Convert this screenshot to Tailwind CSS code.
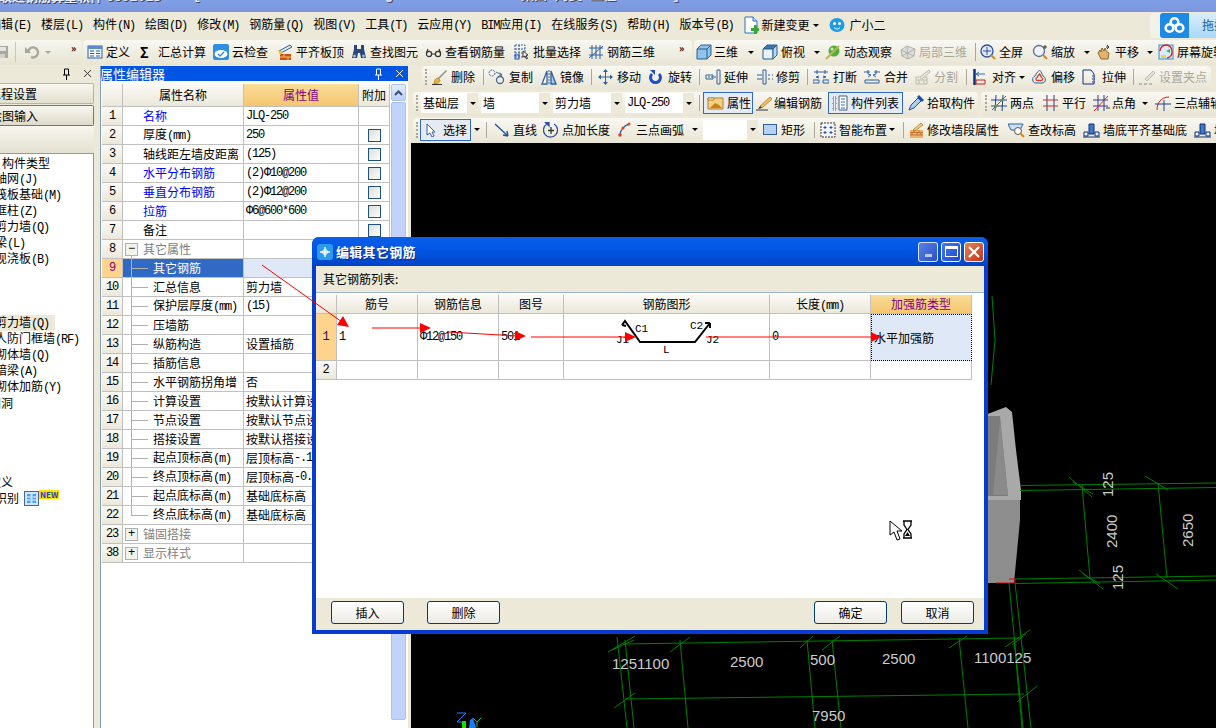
<!DOCTYPE html>
<html lang="zh-CN">
<head>
    <meta charset="UTF-8">
    <title>钢筋算量软件 GGJ2013</title>
    <script src="https://cdn.jsdelivr.net/npm/@tailwindcss/browser@4"></script>
</head>
<body class="relative h-[728px] w-[1216px] overflow-hidden bg-[#ece9d8] font-['Noto_Sans_CJK_SC','Liberation_Sans',sans-serif] text-[12px] leading-[14px] text-black">

    <!-- Title bar, cut off by the top of the window -->
    <div class="h-[12px] overflow-hidden whitespace-nowrap bg-gradient-to-b from-[#7f9fe6] to-[#7c96dc] text-[13px] font-bold text-[#e8ecf8] [text-shadow:1px_1px_0_#445]">
        <div class="-mt-[11px] flex">
            <span class="ml-[-14px] w-[207px] shrink-0">广联达钢筋算量软件 <span class="font-['Liberation_Mono',monospace] text-[13px] tracking-[0.1px]">GGJ2013</span></span>
            <span class="font-['Liberation_Mono',monospace] text-[13px] tracking-[0.2px]">[C:\Documents and Settings\Administrator\桌面\刘斐\工程1.GGJ12]</span>
        </div>
    </div>

    <!-- Menu bar -->
    <div class="flex h-[26px] items-center gap-[10px] whitespace-nowrap pr-0">
        <span class="-ml-[11px]">编辑<span class="font-['Liberation_Mono',monospace] text-[12px] tracking-[-1.2px]">(E)</span></span>
        <span>楼层<span class="font-['Liberation_Mono',monospace] text-[12px] tracking-[-1.2px]">(L)</span></span>
        <span>构件<span class="font-['Liberation_Mono',monospace] text-[12px] tracking-[-1.2px]">(N)</span></span>
        <span>绘图<span class="font-['Liberation_Mono',monospace] text-[12px] tracking-[-1.2px]">(D)</span></span>
        <span>修改<span class="font-['Liberation_Mono',monospace] text-[12px] tracking-[-1.2px]">(M)</span></span>
        <span>钢筋量<span class="font-['Liberation_Mono',monospace] text-[12px] tracking-[-1.2px]">(Q)</span></span>
        <span>视图<span class="font-['Liberation_Mono',monospace] text-[12px] tracking-[-1.2px]">(V)</span></span>
        <span>工具<span class="font-['Liberation_Mono',monospace] text-[12px] tracking-[-1.2px]">(T)</span></span>
        <span>云应用<span class="font-['Liberation_Mono',monospace] text-[12px] tracking-[-1.2px]">(Y)</span></span>
        <span><span class="font-['Liberation_Mono',monospace] text-[12px] tracking-[-1.2px]">BIM</span>应用<span class="font-['Liberation_Mono',monospace] text-[12px] tracking-[-1.2px]">(I)</span></span>
        <span>在线服务<span class="font-['Liberation_Mono',monospace] text-[12px] tracking-[-1.2px]">(S)</span></span>
        <span>帮助<span class="font-['Liberation_Mono',monospace] text-[12px] tracking-[-1.2px]">(H)</span></span>
        <span>版本号<span class="font-['Liberation_Mono',monospace] text-[12px] tracking-[-1.2px]">(B)</span></span>
        <span class="flex items-center gap-[2px]">
            <svg class="h-[18px] w-4 shrink-0" viewBox="0 0 16 18"><path d="M2 1h8l4 4v12H2z" fill="#fff" stroke="#2a6fc0"/><path d="M10 1v4h4" fill="#cfe0f5" stroke="#2a6fc0"/><path d="M11 9v3H8v3h3v3h3v-3h2v-3h-2V9z" fill="#3aa53a"/></svg>
            新建变更
        </span>
        <i class="-ml-[6px] border-x-[3px] border-t-[3px] border-x-transparent border-t-black"></i>
        <span class="flex items-center gap-[4px]">
            <svg class="h-4 w-4 shrink-0" viewBox="0 0 16 16"><ellipse cx="8" cy="8" rx="7.5" ry="7" fill="#1f9be6"/><circle cx="5.5" cy="6.5" r="1.5" fill="#fff"/><circle cx="10.5" cy="6.5" r="1.5" fill="#fff"/><path d="M5 10.5c2 2 4 2 6 0" stroke="#fff" fill="none"/></svg>
            广小二
        </span>
        <div class="ml-auto flex h-[25px] w-[66px] shrink-0 items-center rounded-l-[4px] bg-[#f4f2e8] pl-[10px]">
            <div class="flex h-[25px] w-[29px] shrink-0 items-center justify-center rounded-l-[3px] bg-[#1d8ae6]">
                <svg class="h-[18px] w-[21px]" viewBox="0 0 21 18" fill="none" stroke="#fff" stroke-width="2.6"><circle cx="10.5" cy="6" r="3.8"/><circle cx="5.5" cy="12" r="3.8"/><circle cx="15.5" cy="12" r="3.8"/></svg>
            </div>
            <div class="flex h-[25px] flex-1 items-center overflow-hidden bg-gradient-to-b from-[#d8eefc] to-[#a9d8f6] pl-[13px] text-[#1d5c96]">拖拽</div>
        </div>
    </div>

    <!-- Top toolbars -->
    <div class="flex h-[28px] items-center overflow-hidden whitespace-nowrap">
        <div class="flex h-[25px] w-[82px] shrink-0 items-center rounded-r-[4px] bg-gradient-to-b from-[#f7f6ef] to-[#e6e3d2]">
            <svg class="-ml-[4px] h-3 w-3 shrink-0" viewBox="0 0 12 12"><path d="M0 0h12v12H0z" fill="#a8a8a0"/><path d="M2 1h8v4H2z" fill="#e6e6e0"/><path d="M3 8h6v4H3z" fill="#d0d0c8"/></svg>
            <i class="ml-[7px] h-[20px] w-px bg-[#c8c6b8]"></i>
            <svg class="ml-[8px] h-4 w-4 shrink-0" viewBox="0 0 16 16" fill="none" stroke="#a9a79a" stroke-width="2.4"><path d="M4 8a5 5 0 1 1 3 5"/><path d="M1 3v6h6" fill="#a9a79a" stroke="none"/></svg>
            <i class="ml-[5px] border-x-[3px] border-t-[3px] border-x-transparent border-t-[#a9a79a]"></i>
            <span class="ml-[20px] -mt-[8px] text-[10px] font-bold leading-none">»</span>
        </div>
        <div class="ml-[1px] flex h-[25px] w-[609px] shrink-0 items-center rounded-[4px] bg-gradient-to-b from-[#f9f8f2] to-[#e8e5d4] pl-[4px]">
            <div class="flex w-[53px] shrink-0 items-center gap-[3px]">
                <svg class="h-4 w-4 shrink-0" viewBox="0 0 16 16"><rect x="1" y="2" width="14" height="12" fill="#eef3fb" stroke="#31609f"/><path d="M1 2h14v3H1z" fill="#5b8ad0"/><path d="M3 7h4M3 9.5h4M3 12h4M9 7h4M9 9.5h4M9 12h4" stroke="#31609f"/></svg>定义
            </div>
            <div class="flex w-[73px] shrink-0 items-center gap-[8px]"><span class="w-[10px] text-[14px] font-bold">Σ</span>汇总计算</div>
            <div class="flex w-[64px] shrink-0 items-center gap-[3px]">
                <svg class="h-4 w-4 shrink-0" viewBox="0 0 16 16"><rect width="16" height="16" rx="2" fill="#2f8fe0"/><ellipse cx="8" cy="10" rx="6.5" ry="4" fill="#fff"/><path d="M5 10l2 2 4-4" fill="none" stroke="#2f8fe0" stroke-width="1.4"/></svg>云检查
            </div>
            <div class="flex w-[74px] shrink-0 items-center gap-[3px]">
                <svg class="h-4 w-4 shrink-0" viewBox="0 0 16 16"><path d="M2 7L13 1l2 2L4 9z" fill="#dfe8f4" stroke="#31609f"/><path d="M3 10h11v6H3z" fill="#c8501e"/><path d="M3 13h11M7 10v3M11 13v3" stroke="#f0c060"/><path d="M1 6l5 2-3 3z" fill="#f4c020"/></svg>平齐板顶
            </div>
            <div class="flex w-[74px] shrink-0 items-center gap-[3px]">
                <svg class="h-4 w-4 shrink-0" viewBox="0 0 16 16" fill="#29477c"><path d="M3 1h3v4h4V1h3v4l2 9h-5l-1-5H7l-1 5H1l2-9z"/><circle cx="3.5" cy="12" r="1.5" fill="#9db8de"/><circle cx="12.5" cy="12" r="1.5" fill="#9db8de"/></svg>查找图元
            </div>
            <div class="flex w-[89px] shrink-0 items-center gap-[3px]">
                <svg class="h-4 w-[17px] shrink-0" viewBox="0 0 17 16" fill="none" stroke="#333" stroke-width="1.2"><circle cx="4" cy="10" r="2.6"/><circle cx="13" cy="10" r="2.6"/><path d="M6.5 10h4M1.5 9L3 5M15.5 9L14 5"/></svg>查看钢筋量
            </div>
            <div class="flex w-[74px] shrink-0 items-center gap-[3px]">
                <svg class="h-4 w-4 shrink-0" viewBox="0 0 16 16" fill="none" stroke="#31609f"><path d="M1 1h10v12H1zM1 5h10M1 9h10M5 1v12" stroke-dasharray="2 1"/><rect x="1" y="11" width="4" height="4" stroke="#1f50c0"/><path d="M9 7l5 4-2 .5 1.5 3-1 .5-1.5-3-2 1z" fill="#fff" stroke="#333"/></svg>批量选择
            </div>
            <div class="flex w-[91px] shrink-0 items-center gap-[3px]">
                <svg class="h-4 w-4 shrink-0" viewBox="0 0 16 16" fill="none" stroke="#31609f"><path d="M1 4h14M1 11h14M4 1v14M8 1v14M12 1v14M1 14L15 2"/></svg>钢筋三维
            </div>
            <span class="-mt-[8px] text-[10px] font-bold leading-none">»</span>
        </div>
        <div class="ml-[2px] flex h-[25px] w-[560px] shrink-0 items-center rounded-l-[4px] bg-gradient-to-b from-[#f9f8f2] to-[#e8e5d4] pl-[2px]">
            <div class="flex h-[20px] w-[66px] shrink-0 items-center gap-[2px]">
                <svg class="h-4 w-4 shrink-0" viewBox="0 0 16 16"><path d="M1 5l4-4h10v10l-4 4H1z" fill="#8fc3ea" stroke="#2b5f8f"/><path d="M1 5h10v10M11 5l4-4" fill="none" stroke="#2b5f8f"/></svg>
                <span>三维</span><i class="ml-[8px] border-x-[3px] border-t-[3px] border-x-transparent border-t-black"></i>
            </div>
            <div class="flex w-[63px] shrink-0 items-center gap-[3px]">
                <svg class="h-4 w-4 shrink-0" viewBox="0 0 16 16"><path d="M1 5l4-4h10L11 5z" fill="#3f78b8" stroke="#2b5f8f"/><path d="M1 5h10v10H1z" fill="#e8f2fa" stroke="#2b5f8f"/><path d="M11 5l4-4v10l-4 4z" fill="#b8d8f0" stroke="#2b5f8f"/></svg>
                <span>俯视</span><i class="ml-[6px] border-x-[3px] border-t-[3px] border-x-transparent border-t-black"></i>
            </div>
            <div class="flex w-[75px] shrink-0 items-center gap-[3px]">
                <svg class="h-4 w-4 shrink-0" viewBox="0 0 16 16"><circle cx="9" cy="7" r="5.5" fill="#4caf3a"/><path d="M1 15L14 2" stroke="#c8b050" stroke-width="2"/><circle cx="7" cy="5" r="1.5" fill="#c8f0b0"/></svg>动态观察
            </div>
            <div class="flex w-[75px] shrink-0 items-center gap-[3px] text-[#a9a79a]">
                <svg class="h-4 w-4 shrink-0" viewBox="0 0 16 16" fill="#ddd" stroke="#b5b3a8"><path d="M1 6l6-4 8 3-1 7-6 3-6-3z"/><path d="M7 2l1 13M1 6l13 6M15 5L2 12" fill="none"/></svg>局部三维
            </div>
            <i class="mr-[4px] h-[18px] w-px shrink-0 bg-[#aca899]"></i>
            <div class="flex w-[52px] shrink-0 items-center gap-[3px]">
                <svg class="h-4 w-4 shrink-0" viewBox="0 0 16 16"><circle cx="7" cy="7" r="6" fill="#dfe9f7" stroke="#31509a" stroke-width="1.3"/><path d="M7 3v8M3 7h8" stroke="#31509a"/><path d="M11 11l4 4" stroke="#d08a20" stroke-width="2"/></svg>全屏
            </div>
            <div class="flex w-[64px] shrink-0 items-center gap-[3px]">
                <svg class="h-4 w-4 shrink-0" viewBox="0 0 16 16"><circle cx="7" cy="7" r="5.5" fill="#eef3fb" stroke="#5a6a8a" stroke-width="1.3"/><path d="M11 11l4 4" stroke="#d08a20" stroke-width="2"/><path d="M13 1v4M11 3h4" stroke="#333"/></svg>
                <span>缩放</span><i class="ml-[6px] border-x-[3px] border-t-[3px] border-x-transparent border-t-black"></i>
            </div>
            <div class="flex w-[62px] shrink-0 items-center gap-[3px]">
                <svg class="h-4 w-4 shrink-0" viewBox="0 0 16 16"><path d="M2 9l2-3 1 2 1-4 2 3 1-3 2 4 2 1-1 6H5z" fill="#e0b470" stroke="#8a6a30"/><path d="M11 1l2 2-2 2M13 3h-3" stroke="#333" fill="none"/></svg>
                <span>平移</span><i class="ml-[5px] border-x-[3px] border-t-[3px] border-x-transparent border-t-black"></i>
            </div>
            <div class="flex shrink-0 items-center gap-[3px]">
                <svg class="h-4 w-4 shrink-0" viewBox="0 0 16 16"><rect x="1" y="1" width="14" height="14" fill="#d8ecf8" stroke="#3a8ac8"/><path d="M3 11h5v3H3z" fill="#f0d040"/><path d="M8 7l4-2v4z" fill="#50a850"/><path d="M2 7a6 6 0 0 1 12 0 6 6 0 0 1-5 7" fill="none" stroke="#e02020" stroke-width="1.4"/></svg>屏幕旋转
            </div>
        </div>
    </div>

    <!-- Main area: navigation, property editor, drawing -->
    <div class="flex h-[662px]">

        <!-- Navigation panel -->
        <div class="flex w-[94px] shrink-0 flex-col overflow-hidden whitespace-nowrap">
            <div class="flex h-[15px] shrink-0 items-center justify-end gap-[12px] pr-[2px]">
                <svg class="h-3 w-[9px]" viewBox="0 0 9 12" fill="none" stroke="#000"><path d="M2.5 1v6M6.5 1v6M1 7h7M4.5 7v5M2.5 1h4"/></svg>
                <svg class="h-[9px] w-[9px]" viewBox="0 0 9 9" stroke="#333"><path d="M1 1l7 7M8 1L1 8"/></svg>
            </div>
            <div class="mt-[2px] flex h-[21px] shrink-0 items-center rounded-r-[2px] border border-l-0 border-[#b8b5a4] bg-gradient-to-b from-[#f8f7f0] to-[#e2dfce] pl-[1px]"><span class="-ml-[12px]">工程设置</span></div>
            <div class="mt-[1px] flex h-[21px] shrink-0 items-center rounded-r-[2px] border border-l-0 border-[#77756a] bg-gradient-to-b from-[#f8f7f0] to-[#dedbca]"><span class="-ml-[10px]">绘图输入</span></div>
            <div class="h-[27px] shrink-0 bg-gradient-to-b from-[#f8f7f0] to-[#e4e1d0]"></div>
            <div class="flex-1 border-r border-t border-[#7f9db9] bg-white pt-[1px]">
                <div class="flex h-4 items-center pl-[2px]">构件类型</div>
                <div class="flex h-4 items-center"><span class="-ml-[5px]">轴网<span class="font-['Liberation_Mono',monospace] text-[12px] tracking-[-1.2px]">(J)</span></span></div>
                <div class="flex h-4 items-center"><span class="-ml-[5px]">筏板基础<span class="font-['Liberation_Mono',monospace] text-[12px] tracking-[-1.2px]">(M)</span></span></div>
                <div class="flex h-4 items-center"><span class="-ml-[5px]">框柱<span class="font-['Liberation_Mono',monospace] text-[12px] tracking-[-1.2px]">(Z)</span></span></div>
                <div class="flex h-4 items-center"><span class="-ml-[5px]">剪力墙<span class="font-['Liberation_Mono',monospace] text-[12px] tracking-[-1.2px]">(Q)</span></span></div>
                <div class="flex h-4 items-center"><span class="-ml-[5px]">梁<span class="font-['Liberation_Mono',monospace] text-[12px] tracking-[-1.2px]">(L)</span></span></div>
                <div class="flex h-4 items-center"><span class="-ml-[5px]">现浇板<span class="font-['Liberation_Mono',monospace] text-[12px] tracking-[-1.2px]">(B)</span></span></div>
                <div class="mt-[48px] flex h-4 w-[55px] items-center bg-[#ece9d8]"><span class="-ml-[5px]">剪力墙<span class="font-['Liberation_Mono',monospace] text-[12px] tracking-[-1.2px]">(Q)</span></span></div>
                <div class="flex h-4 items-center"><span class="-ml-[5px]">人防门框墙<span class="font-['Liberation_Mono',monospace] text-[12px] tracking-[-1.2px]">(RF)</span></span></div>
                <div class="flex h-4 items-center"><span class="-ml-[5px]">砌体墙<span class="font-['Liberation_Mono',monospace] text-[12px] tracking-[-1.2px]">(Q)</span></span></div>
                <div class="flex h-4 items-center"><span class="-ml-[5px]">暗梁<span class="font-['Liberation_Mono',monospace] text-[12px] tracking-[-1.2px]">(A)</span></span></div>
                <div class="flex h-4 items-center"><span class="-ml-[5px]">砌体加筋<span class="font-['Liberation_Mono',monospace] text-[12px] tracking-[-1.2px]">(Y)</span></span></div>
                <div class="flex h-4 items-center"><span class="-ml-[11px]">门洞</span></div>
                <div class="mt-[63px] flex h-4 items-center"><span class="-ml-[11px]">定义</span></div>
                <div class="flex h-4 items-center">
                    <span class="-ml-[5px]">识别</span>
                    <svg class="ml-[5px] h-[15px] w-[15px] shrink-0" viewBox="0 0 15 15"><rect x=".5" y=".5" width="14" height="14" fill="#cfe4fa" stroke="#4a6a8a"/><path d="M3 3h3.5v9H3zM8.5 3H12v9H8.5z" fill="#4aa0f0"/><path d="M3 6h3.5M3 9h3.5M8.5 6H12M8.5 9H12" stroke="#fff"/></svg>
                    <span class="-mt-[7px] bg-[#ffe000] px-[1px] text-[8px] font-bold leading-[9px] text-[#2040c0]">NEW</span>
                </div>
            </div>
        </div>

        <!-- Splitter -->
        <div class="w-[6px] shrink-0"></div>

        <!-- Property editor -->
        <div class="flex w-[308px] shrink-0 flex-col whitespace-nowrap border-l border-[#7f9db9] bg-white">
            <div class="flex h-[15px] shrink-0 items-center bg-[#0055e5] text-[13px] text-white">
                <span class="-ml-[1px]">属性编辑器</span>
                <svg class="ml-auto h-3 w-[9px]" viewBox="0 0 9 12" fill="none" stroke="#fff"><path d="M2.5 1v6M6.5 1v6M1 7h7M4.5 7v5M2.5 1h4"/></svg>
                <svg class="ml-[12px] mr-[4px] h-[9px] w-[9px]" viewBox="0 0 9 9" stroke="#fff"><path d="M1 1l7 7M8 1L1 8"/></svg>
            </div>
            <div class="flex flex-1 pl-px pt-[3px]">
                <div class="w-[288px] shrink-0">
                    <div class="flex h-[23px] border-b border-[#c0c0c0] text-center leading-[22px]">
                        <div class="w-[21px] border-r border-[#c0c0c0] bg-gradient-to-b from-[#fbfaf6] to-[#ebe8da]"></div>
                        <div class="w-[121px] border-r border-[#c0c0c0] bg-gradient-to-b from-[#fbfaf6] to-[#ebe8da]">属性名称</div>
                        <div class="w-[115px] border-r border-[#c0c0c0] bg-gradient-to-b from-[#f9dc96] to-[#f5c670] text-[#800080]">属性值</div>
                        <div class="w-[31px] border-r border-[#c0c0c0] bg-gradient-to-b from-[#fbfaf6] to-[#ebe8da]">附加</div>
                    </div>
                    <div id="propRows"></div>
                </div>
                <div class="ml-px flex w-[15px] shrink-0 flex-col">
                    <div class="flex h-[17px] items-center justify-center rounded-[2px] border border-[#a9c3ee] bg-gradient-to-b from-[#e3edfd] to-[#bcd0f7]">
                        <svg class="h-[6px] w-[9px]" viewBox="0 0 9 6" fill="none" stroke="#33507c" stroke-width="2"><path d="M1 5l3.5-3.5L8 5"/></svg>
                    </div>
                    <div class="mt-px h-[618px] rounded-[2px] border border-[#a9c3ee] bg-[#c1d3fb]"></div>
                </div>
            </div>
        </div>

        <div class="w-[3px] shrink-0"></div>

        <!-- Drawing side: three toolbars above the canvas -->
        <div class="flex min-w-0 flex-1 flex-col whitespace-nowrap">
            <div class="ml-[11px] flex h-[24px] w-[789px] shrink-0 items-center rounded-[4px] bg-gradient-to-b from-[#f9f8f2] to-[#e8e5d4] pb-[2px] pl-[3px]">
                <i class="mr-[5px] h-[16px] w-[2px] shrink-0 border-l-2 border-dotted border-[#a9a79a]"></i>
                <div class="flex w-[51px] shrink-0 items-center gap-[3px]">
                    <svg class="h-4 w-4 shrink-0" viewBox="0 0 16 16"><path d="M6 9l8-8 1 1-8 8z" fill="#8a8a8a"/><path d="M2 15c0-4 2-6 4-6l2 2c0 2-2 4-6 4z" fill="#f0b040" stroke="#a06010" stroke-width=".6"/><path d="M0 15.500h10" stroke="#333"/></svg>删除
                </div>
                <i class="mr-[4px] h-[16px] w-px shrink-0 bg-[#aca899]"></i>
                <div class="flex w-[53px] shrink-0 items-center gap-[3px]">
                    <svg class="h-4 w-[18px] shrink-0" viewBox="0 0 18 16" fill="none" stroke="#4a6a90"><circle cx="4" cy="4" r="3" stroke-dasharray="2 1"/><circle cx="12" cy="11" r="3.500" stroke-width="1.300"/><path d="M8 3l6 3M14 6l-3 1M14 6l-2-2.500"/></svg>复制
                </div>
                <div class="flex w-[50px] shrink-0 items-center gap-[3px]">
                    <svg class="h-4 w-4 shrink-0" viewBox="0 0 16 16"><path d="M1 15L6 2v13z" fill="#fff" stroke="#31609f" stroke-width="1.300"/><path d="M15 15L10 2v13z" fill="#a8c4ea" stroke="#31609f" stroke-width="1.300"/><path d="M8 1v15" stroke="#31609f" stroke-dasharray="2 1"/></svg>镜像
                </div>
                <i class="mr-[6px] h-[16px] w-px shrink-0 bg-[#aca899]"></i>
                <div class="flex w-[51px] shrink-0 items-center gap-[4px]">
                    <svg class="h-4 w-[15px] shrink-0" viewBox="0 0 15 16" fill="#31609f"><path d="M7 2h1v12H7zM1 7.500h13v1H1z"/><path d="M7.500 0l2.500 3H5zM7.500 16l2.500-3H5zM0 8l3-2.500v5zM15 8l-3-2.500v5z"/></svg>移动
                </div>
                <div class="flex w-[50px] shrink-0 items-center gap-[6px]">
                    <svg class="h-4 w-[13px] shrink-0" viewBox="0 0 13 16" fill="none"><path d="M3 5a5 5 0 1 0 7 0" stroke="#1f50c0" stroke-width="3"/><path d="M1 1h5v5z" fill="#1f50c0"/></svg>旋转
                </div>
                <i class="mr-[5px] h-[16px] w-px shrink-0 bg-[#aca899]"></i>
                <div class="flex w-[52px] shrink-0 items-center gap-[3px]">
                    <svg class="h-4 w-4 shrink-0" viewBox="0 0 16 16" fill="none" stroke="#31609f"><path d="M12 1h3v14h-3zM1 6h7v4H1z"/><path d="M3 8h8" stroke-dasharray="2 1"/></svg>延伸
                </div>
                <div class="flex w-[50px] shrink-0 items-center gap-[3px]">
                    <svg class="h-4 w-4 shrink-0" viewBox="0 0 16 16" fill="none" stroke="#31609f"><path d="M6 1h3v14H6zM0 6h5M0 10h5M11 6h2M11 10h2M15 6h1M15 10h1"/></svg>修剪
                </div>
                <i class="mr-[5px] h-[16px] w-px shrink-0 bg-[#aca899]"></i>
                <div class="flex w-[51px] shrink-0 items-center gap-[4px]">
                    <svg class="h-4 w-4 shrink-0" viewBox="0 0 16 16" fill="none" stroke="#31609f"><path d="M1 3h14M4 1v4M12 1v4M0 11h6v3H0zM10 11h6v3h-6z"/><path d="M6 7l-3 1 3 1M10 7l3 1-3 1"/></svg>打断
                </div>
                <div class="flex w-[51px] shrink-0 items-center gap-[4px]">
                    <svg class="h-4 w-4 shrink-0" viewBox="0 0 16 16" fill="none" stroke="#31609f"><path d="M0 3h6M10 3h6M4 1v4M12 1v4M1 11h14v3H1z"/><path d="M4 8l3-2-3-1M12 8l-3-2 3-1"/></svg>合并
                </div>
                <div class="flex w-[51px] shrink-0 items-center gap-[3px] text-[#a9a79a]">
                    <svg class="h-4 w-4 shrink-0" viewBox="0 0 16 16" fill="none" stroke="#bdbbae"><path d="M1 8h11v7H1zM1 11h11M6 8v3M4 11v4M9 11v4"/><path d="M5 8l9-7 1 2-8 7" fill="#e6e4da"/></svg>分割
                </div>
                <i class="mr-[6px] h-[16px] w-px shrink-0 bg-[#aca899]"></i>
                <div class="flex w-[59px] shrink-0 items-center gap-[6px]">
                    <svg class="h-4 w-[13px] shrink-0" viewBox="0 0 13 16" fill="none"><path d="M1.500 0v16" stroke="#10307a" stroke-width="2.500"/><path d="M3 11h9v4H3z" stroke="#c02020"/><path d="M3 5h9M6 3L3 5l3 2" stroke="#2a6fc0"/></svg>
                    <span>对齐</span><i class="-ml-[3px] border-x-[3px] border-t-[3px] border-x-transparent border-t-black"></i>
                </div>
                <div class="flex w-[50px] shrink-0 items-center gap-[4px]">
                    <svg class="h-4 w-[15px] shrink-0" viewBox="0 0 15 16" fill="none"><path d="M7.500 1c2 2 2.500 4 3.500 6 3 1 3.500 7-1 7H4c-4.500 0-4-6-1-7 1-2 2.500-4 4.500-6z" stroke="#31609f"/><path d="M7.500 5c1 1 1.500 2 2 3.500 1.500.5 1.500 3-.5 3H5.500c-2 0-2-2.500-.5-3 .5-1.500 1.500-2.500 2.500-3.500z" stroke="#d04030" stroke-width="1.300"/></svg>偏移
                </div>
                <div class="flex w-[51px] shrink-0 items-center gap-[5px]">
                    <svg class="h-4 w-[15px] shrink-0" viewBox="0 0 15 16" fill="none" stroke="#10307a"><path d="M1 1h8l3 4v10H1z"/><path d="M10 7h3M10 10h3M10 13h3" stroke-dasharray="1 1"/></svg>拉伸
                </div>
                <i class="mr-[5px] h-[16px] w-px shrink-0 bg-[#aca899]"></i>
                <div class="flex items-center gap-[3px] text-[#a9a79a]">
                    <svg class="h-4 w-[17px] shrink-0" viewBox="0 0 17 16" fill="none" stroke="#bdbbae"><path d="M6 10l8-8 2 2-8 8z" fill="#e0dfd8"/><path d="M0 15h3M5 15h3M10 15h3" stroke="#8a8a8a"/></svg>设置夹点
                </div>
            </div>

            <div class="mt-[2px] ml-[2px] flex h-[24px] shrink-0 items-center">
                <div class="flex h-[24px] w-[565px] shrink-0 items-center rounded-[4px] bg-gradient-to-b from-[#f9f8f2] to-[#e8e5d4] pb-[2px] pl-[3px]">
                    <i class="mr-[3px] h-[16px] w-[2px] shrink-0 border-l-2 border-dotted border-[#a9a79a]"></i>
                    <div class="mr-[3px] flex h-[20px] w-[57px] shrink-0 items-center bg-white pl-[2px]">基础层<span class="ml-auto flex h-[20px] w-[11px] items-center justify-center bg-[#ece9d8]"><i class="border-x-[3px] border-t-[3px] border-x-transparent border-t-black"></i></span></div>
                    <div class="mr-[3px] flex h-[20px] w-[69px] shrink-0 items-center bg-white pl-[2px]">墙<span class="ml-auto flex h-[20px] w-[11px] items-center justify-center bg-[#ece9d8]"><i class="border-x-[3px] border-t-[3px] border-x-transparent border-t-black"></i></span></div>
                    <div class="mr-[3px] flex h-[20px] w-[69px] shrink-0 items-center bg-white pl-[2px]">剪力墙<span class="ml-auto flex h-[20px] w-[11px] items-center justify-center bg-[#ece9d8]"><i class="border-x-[3px] border-t-[3px] border-x-transparent border-t-black"></i></span></div>
                    <div class="flex h-[20px] w-[69px] shrink-0 items-center bg-white pl-[2px]"><span class="font-['Liberation_Mono',monospace] text-[12px] tracking-[-1.2px]">JLQ-250</span><span class="ml-auto flex h-[20px] w-[11px] items-center justify-center bg-[#ece9d8]"><i class="border-x-[3px] border-t-[3px] border-x-transparent border-t-black"></i></span></div>
                    <i class="ml-[5px] mr-[3px] h-[16px] w-px shrink-0 bg-[#aca899]"></i>
                    <div class="flex h-[22px] w-[50px] shrink-0 items-center gap-[3px] border border-[#316ac5] bg-[#e6eaf2] pl-[3px]">
                        <svg class="h-4 w-[17px] shrink-0" viewBox="0 0 17 16"><path d="M1 3h15v11H1z" fill="#f6d280" stroke="#b08030"/><path d="M1 3h6v2H1z" fill="#fff" stroke="#b08030"/><path d="M3 13l5-5 4 2 3 3z" fill="#c88020"/></svg>属性
                    </div>
                    <div class="ml-[3px] flex w-[72px] shrink-0 items-center gap-[2px]">
                        <svg class="h-4 w-4 shrink-0" viewBox="0 0 16 16"><path d="M4 11L14 2l2 2-10 9z" fill="#f0c060" stroke="#a06010" stroke-width=".6"/><path d="M0 15h12" stroke="#333"/><path d="M4 11l-2 3 4-1z" fill="#333"/></svg>编辑钢筋
                    </div>
                    <div class="flex h-[22px] w-[75px] shrink-0 items-center gap-[3px] border border-[#316ac5] bg-[#e6eaf2] pl-[3px]">
                        <svg class="h-4 w-4 shrink-0" viewBox="0 0 16 16" fill="none" stroke="#4a5a70"><path d="M1 2h3v3H1zM1 7h3v3H1zM1 12h3v3H1z" stroke-dasharray="1 1"/><path d="M7 1h8v14H7z" fill="#fff"/><path d="M9 4h4M9 7h4M9 10h4M9 13h4" stroke="#2a6fc0"/></svg>构件列表
                    </div>
                    <div class="ml-[5px] flex shrink-0 items-center gap-[3px]">
                        <svg class="h-4 w-4 shrink-0" viewBox="0 0 16 16"><path d="M1 15l2-5 7-7 3 3-7 7z" fill="#a8d0f0" stroke="#1f50a0"/><path d="M9 2l2-2 5 5-2 2z" fill="#1f50a0"/></svg>拾取构件
                    </div>
                </div>
                <div class="ml-[3px] flex h-[24px] flex-1 items-center overflow-hidden rounded-l-[4px] bg-gradient-to-b from-[#f9f8f2] to-[#e8e5d4] pb-[2px] pl-[4px]">
                    <i class="mr-[4px] h-[16px] w-[2px] shrink-0 border-l-2 border-dotted border-[#a9a79a]"></i>
                    <div class="flex w-[52px] shrink-0 items-center gap-[3px]">
                        <svg class="h-4 w-4 shrink-0" viewBox="0 0 16 16" fill="none"><path d="M0 5h16M0 11h16M5 0l-1 16M12 0l-1 16" stroke="#2a3f8f"/><path d="M1 15L15 1" stroke="#e02020"/><circle cx="5" cy="11" r="1.500" fill="#50a030"/><circle cx="11" cy="5" r="1.500" fill="#50a030"/></svg>两点
                    </div>
                    <div class="flex w-[50px] shrink-0 items-center gap-[4px]">
                        <svg class="h-4 w-[15px] shrink-0" viewBox="0 0 15 16" fill="none"><path d="M4 0v16M11 0v16" stroke="#2a3f8f"/><path d="M0 5h15M0 11h15" stroke="#c03030"/></svg>平行
                    </div>
                    <div class="flex w-[62px] shrink-0 items-center gap-[1px]">
                        <svg class="h-4 w-[18px] shrink-0" viewBox="0 0 18 16" fill="none"><path d="M0 5h15M0 11h15M5 0v16M11 0v16" stroke="#2a3f8f"/><path d="M1 16L15 1" stroke="#e02020"/><path d="M13 13h4" stroke="#333"/></svg>
                        <span>点角</span><i class="ml-[5px] border-x-[3px] border-t-[3px] border-x-transparent border-t-black"></i>
                    </div>
                    <div class="flex shrink-0 items-center gap-[3px]">
                        <svg class="h-4 w-4 shrink-0" viewBox="0 0 16 16" fill="none"><path d="M2 15C2 8 6 2 14 2" stroke="#d02020"/><path d="M0 9h16M9 5v11" stroke="#2a3f8f"/></svg>三点辅轴
                    </div>
                </div>
            </div>

            <div class="mt-[2px] ml-[2px] flex h-[25px] shrink-0 items-center overflow-hidden rounded-l-[4px] bg-gradient-to-b from-[#f9f8f2] to-[#e8e5d4] pb-[2px] pl-[3px]">
                <i class="mr-[2px] h-[16px] w-[2px] shrink-0 border-l-2 border-dotted border-[#a9a79a]"></i>
                <div class="flex h-[22px] w-[51px] shrink-0 items-center gap-[6px] border border-[#316ac5] bg-[#e6eaf2] pl-[5px]">
                    <svg class="h-[14px] w-[11px] shrink-0" viewBox="0 0 11 14"><path d="M1 1l8 8H6l2 4-2 1-2-4-3 2z" fill="#fff" stroke="#31609f"/></svg>选择
                </div>
                <i class="ml-[3px] border-x-[3px] border-t-[3px] border-x-transparent border-t-black"></i>
                <i class="ml-[6px] mr-[7px] h-[16px] w-px shrink-0 bg-[#aca899]"></i>
                <div class="flex w-[49px] shrink-0 items-center gap-[3px]">
                    <svg class="h-4 w-4 shrink-0" viewBox="0 0 16 16" fill="none" stroke="#1f50a0" stroke-width="1.300"><path d="M1 2l13 12M14 14l-1-5M14 14l-5-1"/></svg>直线
                </div>
                <div class="flex w-[75px] shrink-0 items-center gap-[3px]">
                    <svg class="h-4 w-4 shrink-0" viewBox="0 0 16 16" fill="none" stroke="#31509a" stroke-width="1.300"><path d="M4 2a7 7 0 1 0 7 0"/><path d="M8 5v7M5 8.500h6" stroke="#333"/><path d="M2 0h4v4z" fill="#31509a"/></svg>点加长度
                </div>
                <div class="flex w-[85px] shrink-0 items-center gap-[5px]">
                    <svg class="h-4 w-[13px] shrink-0" viewBox="0 0 13 16" fill="none"><path d="M2 14C2 8 6 3 12 2" stroke="#2a5fb0" stroke-width="1.300"/><circle cx="2" cy="13" r="1.800" fill="#e04020"/><circle cx="5" cy="6" r="1.500" fill="#e04020"/><circle cx="11" cy="2" r="1.500" fill="#e04020"/></svg>
                    <span>三点画弧</span><i class="ml-[3px] border-x-[3px] border-t-[3px] border-x-transparent border-t-black"></i>
                </div>
                <div class="mr-[5px] flex h-[20px] w-[55px] shrink-0 items-center bg-white"><span class="ml-auto flex h-[20px] w-[11px] items-center justify-center bg-[#ece9d8]"><i class="border-x-[3px] border-t-[3px] border-x-transparent border-t-black"></i></span></div>
                <div class="flex w-[51px] shrink-0 items-center gap-[4px]">
                    <svg class="h-[13px] w-[14px] shrink-0" viewBox="0 0 14 13"><rect x=".5" y="1.500" width="13" height="10" fill="#b7d0f4" stroke="#31609f"/></svg>矩形
                </div>
                <i class="mr-[5px] h-[16px] w-px shrink-0 bg-[#aca899]"></i>
                <div class="flex w-[83px] shrink-0 items-center gap-[3px]">
                    <svg class="h-4 w-4 shrink-0" viewBox="0 0 16 16"><rect x="1" y="1" width="14" height="14" fill="#f4f4ff" stroke="#333" stroke-dasharray="2 1"/><path d="M5 4v3M3.500 5.500h3M11 4v3M9.500 5.500h3M5 9v3M3.500 10.500h3M11 9v3M9.500 10.500h3" stroke="#1f50a0"/></svg>
                    <span>智能布置</span><i class="-ml-[1px] border-x-[3px] border-t-[3px] border-x-transparent border-t-black"></i>
                </div>
                <i class="mr-[5px] h-[16px] w-px shrink-0 bg-[#aca899]"></i>
                <div class="flex w-[99px] shrink-0 items-center gap-[3px]">
                    <svg class="h-4 w-[15px] shrink-0" viewBox="0 0 15 16"><path d="M1 8h13v8H1z" fill="#f0b070"/><path d="M1 10.500h13M1 13h13M5 8v2.500M10 8v2.500M3 10.500V13M8 10.500V13M12 10.500V13" stroke="#b06020" stroke-width=".7"/><path d="M4 8l8-7 2 2-8 6z" fill="#f0d070" stroke="#806010" stroke-width=".6"/></svg>修改墙段属性
                </div>
                <div class="flex w-[75px] shrink-0 items-center gap-[3px]">
                    <svg class="h-4 w-[17px] shrink-0" viewBox="0 0 17 16"><path d="M0 2h15l-3 6H3z" fill="#cfe0f5" stroke="#31609f"/><circle cx="10" cy="9" r="3.500" fill="#fff" stroke="#555"/><path d="M12.500 11.500l3.500 3.500" stroke="#d08a20" stroke-width="2"/></svg>查改标高
                </div>
                <div class="flex w-[111px] shrink-0 items-center gap-[3px]">
                    <svg class="h-4 w-[17px] shrink-0" viewBox="0 0 17 16"><path d="M6 2h5v10H6z" fill="#3f78c8" stroke="#10307a"/><path d="M1 10h4v4H1zM12 10h4v4h-4z" fill="#e8f0fa" stroke="#10307a"/><path d="M0 15h17" stroke="#10307a"/></svg>墙底平齐基础底
                </div>
                <div class="flex shrink-0 items-center gap-[3px]">
                    <svg class="h-4 w-[17px] shrink-0" viewBox="0 0 17 16"><path d="M6 2h5v10H6z" fill="#3f78c8" stroke="#10307a"/><path d="M1 10h4v4H1zM12 10h4v4h-4z" fill="#e8f0fa" stroke="#10307a"/><path d="M0 15h17" stroke="#10307a"/></svg>墙顶平齐
                </div>
            </div>

            <!-- 3D canvas, viewBox is in window coordinates -->
            <div class="relative flex-1 bg-black">
                <svg class="absolute inset-0 h-[585px] w-[805px]" viewBox="411 143 805 585" fill="none">
                    <path d="M985 415L1006 407 1012 412 1016 450 1021 490V500H985z" fill="#a9a9a9"/>
                    <path d="M985 416H1000L1008 496H985z" fill="#7c7c7c"/>
                    <path d="M1000 420L1008 495H993z" fill="#8a8a8a"/>
                    <path d="M985 500H1020V520L1014 583H985z" fill="#8e8e8e"/>
                    <path d="M996 583H1015V579H1009" stroke="#e00000"/>
                    <g stroke="#008000">
                        <path d="M1020 485.500L1216 483M1020 490.500L1216 487.500M1015 579L1216 576M1015 583.500L1216 580"/>
                        <path d="M1082 485L1090 579M1158 483L1167 578"/>
                        <path d="M1069 477L1092 497M1073 482L1093 494M1145 476L1168 490M1079 570L1103 589M1083 574L1100 584M1156 574L1178 589"/>
                        <path d="M1009 583L1023 728M1015 583L1031 728"/>
                        <path d="M623 644L1020 638M625 699L1024 694"/>
                        <path d="M617 637L627 728M625 640L634 728M680 640L688 728M807 640L815 728M832 640L841 728M959 638L968 728M1014 638L1022 728"/>
                        <path d="M608 652L635 636M612 650L634 640M670 652L690 637M614 708L635 693M800 648L813 636M822 650L840 636M949 648L967 636M1005 647L1030 630M1012 645L1026 634M1017 702L1037 686"/>
                        <path d="M992 296L995 340 991 385"/>
                    </g>
                    <g fill="#cccccc" font-family="'Liberation Sans',sans-serif" font-size="15">
                        <text x="612" y="669">1251100</text>
                        <text x="730" y="667">2500</text>
                        <text x="810" y="665">500</text>
                        <text x="882" y="664">2500</text>
                        <text x="974" y="663">1100125</text>
                        <text x="812" y="721">7950</text>
                        <text transform="translate(1113 497) rotate(-90)">125</text>
                        <text transform="translate(1117 548) rotate(-90)">2400</text>
                        <text transform="translate(1193 547) rotate(-90)">2650</text>
                        <text transform="translate(1123 590) rotate(-90)">125</text>
                    </g>
                    <path d="M457 713H466L457 722H466" stroke="#2080ff"/>
                    <path d="M473 718L477 722 481 718M477 722V727" stroke="#20c060"/>
                    <path d="M469 728L470 720 473 718 476 728z" fill="#1080ff"/>
                    <path d="M462 721H466V728H462z" fill="#10e000"/>
                </svg>
            </div>
        </div>
    </div>

    <!-- Dialog: 编辑其它钢筋 -->
    <div class="absolute left-[312px] top-[237px] z-10 flex h-[397px] w-[676px] flex-col rounded-t-[7px] bg-[#0a3bd1] px-[4px] pb-[4px] whitespace-nowrap">
        <div class="-mx-[4px] flex h-[29px] shrink-0 items-center rounded-t-[7px] bg-gradient-to-b from-[#0a5fe8] via-[#0054e3] to-[#0043c4] pl-[5px] pr-[4px]">
            <svg class="h-4 w-4 shrink-0" viewBox="0 0 16 16"><rect width="16" height="16" rx="3" fill="#2a9af0"/><path d="M8 3v10M3 8h10" stroke="#fff" stroke-width="1.500"/><circle cx="8" cy="8" r="2.500" fill="none" stroke="#fff"/></svg>
            <span class="ml-[3px] text-[13px] font-bold tracking-[0.3px] text-white [text-shadow:1px_1px_0_#0a2a90]">编辑其它钢筋</span>
            <div class="ml-auto flex h-[20px] w-[20px] items-end justify-center rounded-[3px] border border-white/80 bg-gradient-to-br from-[#5a80e8] to-[#2a50c0] pb-[4px]"><i class="h-[3px] w-[7px] bg-[#b8c8f0]"></i></div>
            <div class="ml-[3px] flex h-[20px] w-[20px] items-center justify-center rounded-[3px] border border-white bg-gradient-to-br from-[#4a78e8] to-[#1a48d0]"><i class="h-[11px] w-[13px] border border-t-[3px] border-white"></i></div>
            <div class="ml-[3px] flex h-[20px] w-[20px] items-center justify-center rounded-[3px] border border-white bg-gradient-to-br from-[#e8805a] to-[#c03010]">
                <svg class="h-3 w-3" viewBox="0 0 12 12" stroke="#fff" stroke-width="2.200"><path d="M1 1l10 10M11 1L1 11"/></svg>
            </div>
        </div>
        <div class="flex min-h-0 flex-1 flex-col bg-white">
            <div class="flex h-[27px] shrink-0 items-center border-b border-[#9db4d0] bg-[#ece9d8] pl-[7px]">其它钢筋列表:</div>
            <div class="mt-[2px] grid w-[656px] grid-cols-[21px_81px_81px_65px_206px_101px_101px] grid-rows-[19px_47px_19px] text-center leading-[18px] *:border-b *:border-r *:border-[#c0c0c0]">
                <div class="bg-gradient-to-b from-[#fbfaf6] to-[#ebe8da]"></div>
                <div class="bg-gradient-to-b from-[#fbfaf6] to-[#ebe8da]">筋号</div>
                <div class="bg-gradient-to-b from-[#fbfaf6] to-[#ebe8da]">钢筋信息</div>
                <div class="bg-gradient-to-b from-[#fbfaf6] to-[#ebe8da]">图号</div>
                <div class="bg-gradient-to-b from-[#fbfaf6] to-[#ebe8da]">钢筋图形</div>
                <div class="bg-gradient-to-b from-[#fbfaf6] to-[#ebe8da]">长度<span class="font-['Liberation_Mono',monospace] text-[12px] tracking-[-1.2px]">(mm)</span></div>
                <div class="bg-gradient-to-b from-[#f9dc96] to-[#f5c670] text-[#800080]">加强筋类型</div>

                <div class="flex items-center justify-center bg-[#ffd48c] font-['Liberation_Mono',monospace] text-[12px] text-[#400060]">1</div>
                <div class="flex items-center pl-[2px] text-left font-['Liberation_Mono',monospace] text-[12px] tracking-[-1.2px]">1</div>
                <div class="flex items-center pl-[2px] text-left font-['Liberation_Mono',monospace] text-[12px] tracking-[-1.2px]">Φ12@150</div>
                <div class="flex items-center pl-[2px] text-left font-['Liberation_Mono',monospace] text-[12px] tracking-[-1.2px]">501</div>
                <div>
                    <svg class="h-[46px] w-[205px]" viewBox="564 314 205 46" fill="none">
                        <path d="M622 325L625 321 640 342H695L710 323M710 323L705 323M710 323V328M622 325L626 326" stroke="#000" stroke-width="2"/>
                        <g fill="#000" stroke="none" font-family="'Liberation Mono',monospace" font-size="11">
                            <text x="635" y="332">C1</text>
                            <text x="690" y="329">C2</text>
                            <text x="616" y="343">J1</text>
                            <text x="706" y="343">J2</text>
                            <text x="663" y="353">L</text>
                        </g>
                    </svg>
                </div>
                <div class="flex items-center pl-[2px] text-left font-['Liberation_Mono',monospace] text-[12px] tracking-[-1.2px]">0</div>
                <div class="flex items-center border border-dotted !border-black bg-[#dfe8f6] pl-[2px] text-left">水平加强筋</div>

                <div class="bg-gradient-to-b from-[#fbfaf6] to-[#ebe8da] font-['Liberation_Mono',monospace] text-[12px]">2</div>
                <div></div><div></div><div></div><div></div><div></div><div></div>
            </div>
            <div class="mt-auto flex h-[32px] shrink-0 items-start bg-[#ece9d8] pl-[15px] pr-[10px] pt-[3px]">
                <button class="h-[23px] w-[73px] rounded-[3px] border border-[#003c74] bg-gradient-to-b from-white to-[#ecebe5]">插入</button>
                <button class="ml-[23px] h-[23px] w-[73px] rounded-[3px] border border-[#003c74] bg-gradient-to-b from-white to-[#ecebe5]">删除</button>
                <button class="ml-auto h-[23px] w-[73px] rounded-[3px] border border-[#003c74] bg-gradient-to-b from-white to-[#ecebe5]">确定</button>
                <button class="ml-[14px] h-[23px] w-[73px] rounded-[3px] border border-[#003c74] bg-gradient-to-b from-white to-[#ecebe5]">取消</button>
            </div>
        </div>
    </div>

    <!-- Red annotation arrows and the busy cursor lie over everything -->
    <svg class="pointer-events-none absolute inset-0 z-20 h-[728px] w-[1216px]" viewBox="0 0 1216 728" fill="none">
        <g stroke="#ff0000">
            <path d="M262 265L342 322"/>
            <path d="M372 328H422"/>
            <path d="M448 332L518 336"/>
            <path d="M531 337H628"/>
            <path d="M706 337H874"/>
        </g>
        <g fill="#ff0000">
            <path d="M349 327L337 325 343 316z"/>
            <path d="M431 328L420 323V333z"/>
            <path d="M526 336L515 331V341z"/>
            <path d="M636 337L625 332V342z"/>
            <path d="M881 337L871 332V342z"/>
        </g>
        <path d="M890 521V535L894 532 897 540 900 539 897 531 902 531z" fill="#fff" stroke="#000"/>
        <path d="M903 521H912M903 538H912M904 521V525L907 529.500 904 534V538M911 521V525L908 529.500 911 534V538" stroke="#000" stroke-width="1.300"/>
        <path d="M905 536L907.500 532 910 536z" fill="#000"/>
    </svg>

    <script>
        // Property rows: [number, name, value, kind]
        const rows = [
            [1, '名称', 'JLQ-250', 'link'],
            [2, '厚度(mm)', '250', 'check'],
            [3, '轴线距左墙皮距离', '(125)', 'check'],
            [4, '水平分布钢筋', '(2)Φ10@200', 'linkCheck'],
            [5, '垂直分布钢筋', '(2)Φ12@200', 'linkCheck'],
            [6, '拉筋', 'Φ6@600*600', 'linkCheck'],
            [7, '备注', '', 'check'],
            [8, '其它属性', '', 'open'],
            [9, '其它钢筋', '', 'selected'],
            [10, '汇总信息', '剪力墙', 'child'],
            [11, '保护层厚度(mm)', '(15)', 'child'],
            [12, '压墙筋', '', 'child'],
            [13, '纵筋构造', '设置插筋', 'child'],
            [14, '插筋信息', '', 'child'],
            [15, '水平钢筋拐角增', '否', 'child'],
            [16, '计算设置', '按默认计算设置计算', 'child'],
            [17, '节点设置', '按默认节点设置计算', 'child'],
            [18, '搭接设置', '按默认搭接设置计算', 'child'],
            [19, '起点顶标高(m)', '层顶标高-.1', 'child'],
            [20, '终点顶标高(m)', '层顶标高-0.1', 'child'],
            [21, '起点底标高(m)', '基础底标高', 'child'],
            [22, '终点底标高(m)', '基础底标高', 'last'],
            [23, '锚固搭接', '', 'closed'],
            [38, '显示样式', '', 'closed']
        ];

        // SimSun style half width latin
        function latin(text) {
            return text.replace(/[\x00-\x7fΦ]+/g, m => `<span class="font-['Liberation_Mono',monospace] text-[12px] tracking-[-1.2px]">${m}</span>`);
        }

        function nameCell(name, kind) {
            if (kind === 'open' || kind === 'closed') {
                const sign = kind === 'open' ? '−' : '+';
                const stem = kind === 'open' ? '<i class="absolute left-[8px] top-[15px] h-[4px] w-px bg-[#b0b0b0]"></i>' : '';
                return `${stem}<span class="ml-[2px] flex h-[13px] w-[13px] items-center justify-center border border-[#b0b0b0] bg-[#f3f3ee] font-['Liberation_Mono',monospace] text-[12px] text-black">${sign}</span><span class="ml-[5px] text-[#808080]">${name}</span>`;
            }
            if (kind === 'child' || kind === 'selected' || kind === 'last') {
                const height = kind === 'last' ? 'h-[10px]' : 'h-[19px]';
                return `<i class="absolute left-[8px] top-0 w-px bg-[#b0b0b0] ${height}"></i><i class="absolute left-[9px] top-[9px] h-px w-[16px] bg-[#b0b0b0]"></i><span class="ml-[30px]">${latin(name)}</span>`;
            }
            const colour = kind === 'link' || kind === 'linkCheck' ? 'text-[#0000ff]' : '';
            return `<span class="ml-[20px] ${colour}">${latin(name)}</span>`;
        }

        document.getElementById('propRows').innerHTML = rows.map(([num, name, value, kind]) => {
            const selected = kind === 'selected';
            const hasCheck = kind === 'check' || kind === 'linkCheck';
            return `<div class="flex h-[19px] border-b border-[#c0c0c0]">
                <div class="flex w-[21px] items-center justify-center border-r border-[#c0c0c0] font-['Liberation_Mono',monospace] text-[12px] tracking-[-1.2px] ${selected ? 'bg-[#ffd48c] text-[#800080]' : 'bg-gradient-to-b from-[#fbfaf6] to-[#ebe8da]'}">${num}</div>
                <div class="relative flex w-[121px] items-center overflow-hidden border-r border-[#c0c0c0] ${selected ? 'bg-[#316ac5] text-white' : ''}">${nameCell(name, kind)}</div>
                <div class="flex w-[115px] items-center overflow-hidden border-r border-[#c0c0c0] pl-[2px] ${selected ? 'bg-[#dfe8f6]' : ''}">${latin(value)}</div>
                <div class="flex w-[31px] items-center justify-center border-r border-[#c0c0c0]">${hasCheck ? '<i class="h-[13px] w-[13px] border border-[#1c5180] bg-gradient-to-br from-[#dcdcd7] to-white"></i>' : ''}</div>
            </div>`;
        }).join('');
    </script>
</body>
</html>
